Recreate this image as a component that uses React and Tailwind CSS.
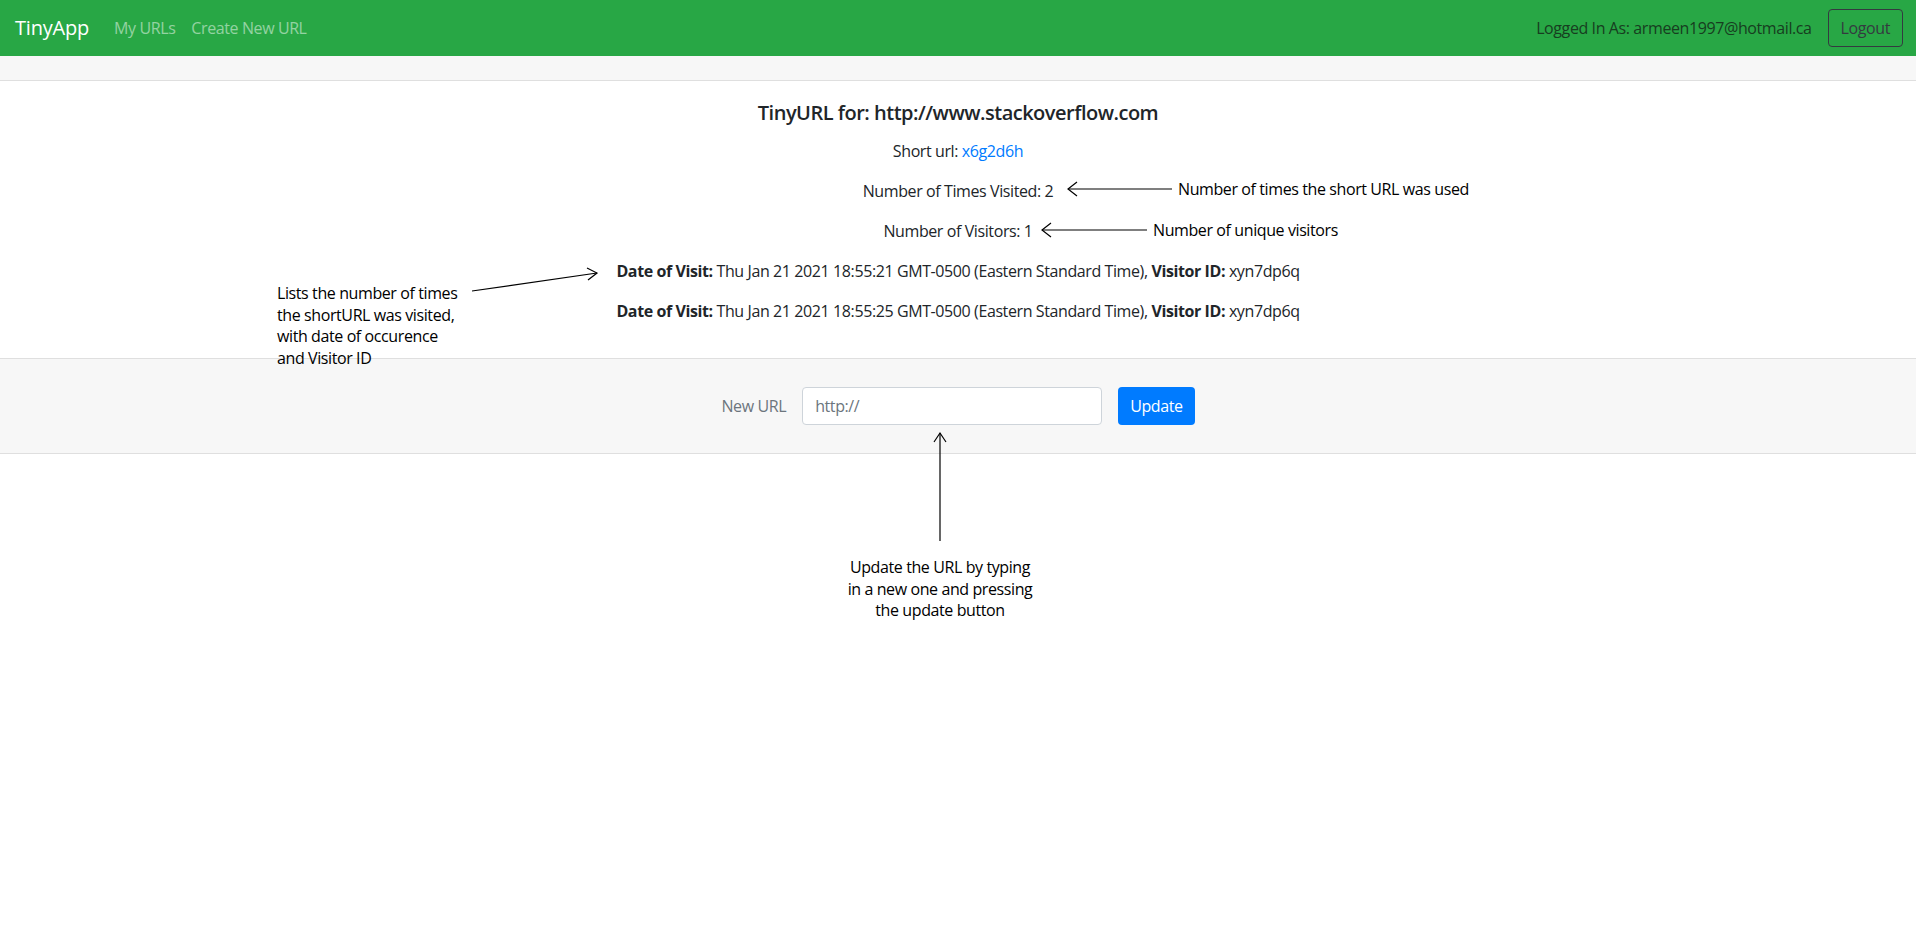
import React from 'react';

const visits = [
    { date: 'Thu Jan 21 2021 18:55:21 GMT-0500 (Eastern Standard Time)', visitor: 'xyn7dp6q' },
    { date: 'Thu Jan 21 2021 18:55:25 GMT-0500 (Eastern Standard Time)', visitor: 'xyn7dp6q' },
];

// hand-drawn annotation arrows laid over the page
const Arrows = () => (
    <svg className="absolute left-0 top-0 pointer-events-none" width="1916" height="946" fill="none" stroke="#000" strokeWidth="1.2">
        <line x1="1068" y1="189" x2="1172" y2="189" />
        <polyline points="1077,182 1068,189 1077,196" />
        <line x1="1042" y1="230" x2="1147" y2="230" />
        <polyline points="1051,223 1042,230 1051,237" />
        <line x1="472" y1="291" x2="597" y2="273" />
        <polyline points="587,268 597,273 588,280" />
        <line x1="940" y1="433" x2="940" y2="541" />
        <polyline points="934,442 940,433 946,442" />
    </svg>
);

const App = () => {
    return (
        <div className="relative min-h-screen bg-white text-[#212529] font-['Open_Sans',sans-serif] text-base tracking-[-0.4px]">
            <nav className="h-14 bg-[#28a745] flex items-center pl-[15px] pr-[13px]">
                <span className="text-white text-xl mr-[17px] tracking-[-0.2px]">TinyApp</span>
                <a className="text-white/50 px-2">My URLs</a>
                <a className="text-white/50 px-2">Create New URL</a>
                <div className="ml-auto flex items-center gap-4">
                    <span className="text-[#173d20]">Logged In As: armeen1997@hotmail.ca</span>
                    <button className="h-[38px] px-3 border border-[#343a40] rounded text-[#343a40]">Logout</button>
                </div>
            </nav>

            <div className="border-b border-[#dfdfdf]">
                <div className="h-[25px] bg-[#f7f7f7] border-b border-[#dfdfdf]" />
                <div className="px-5 pt-5 pb-[19px] text-center">
                    <h5 className="text-xl font-semibold leading-6 mb-[14px] tracking-[-0.5px]">TinyURL for: http://www.stackoverflow.com</h5>
                    <p className="leading-6 mb-4">Short url: <a className="text-[#007bff]">x6g2d6h</a></p>
                    <p className="leading-6 mb-4">Number of Times Visited: 2</p>
                    <p className="leading-6 mb-4">Number of Visitors: 1</p>
                    {visits.map((v, i) => (
                        <p key={i} className="leading-6 mb-4">
                            <b>Date of Visit:</b> {v.date}, <b>Visitor ID:</b> {v.visitor}
                        </p>
                    ))}
                </div>
                <div className="bg-[#f7f7f7] border-t border-[#dfdfdf] py-[28px] flex items-center justify-center gap-4">
                    <label className="text-[#6c757d]">New URL</label>
                    <input
                        type="text"
                        placeholder="http://"
                        className="w-[300px] h-[38px] px-3 bg-white border border-[#ced4da] rounded outline-none placeholder:text-[#6c757d]"
                    />
                    <button className="h-[38px] px-3 bg-[#007bff] text-white rounded">Update</button>
                </div>
            </div>

            <Arrows />
            <div className="absolute left-[1178px] top-[177px] leading-6 text-black">Number of times the short URL was used</div>
            <div className="absolute left-[1153px] top-[218px] leading-6 text-black">Number of unique visitors</div>
            <div className="absolute left-[277px] top-[283px] leading-[21.7px] text-black">
                Lists the number of times<br />
                the shortURL was visited,<br />
                with date of occurence<br />
                and Visitor ID
            </div>
            <div className="absolute left-[740px] top-[557px] w-[400px] text-center leading-[21.5px] text-black">
                Update the URL by typing<br />
                in a new one and pressing<br />
                the update button
            </div>
        </div>
    );
};

export default App;
